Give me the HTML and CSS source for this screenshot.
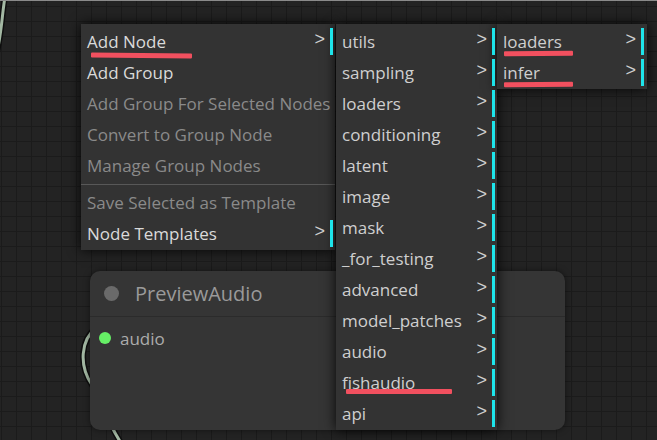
FILE: index.html
```html
<!DOCTYPE html>
<html>
<head>
<meta charset="utf-8">
<link rel="stylesheet" href="styles.css">
</head>
<body>
<div class="canvas">
  <svg class="links" width="657" height="440" viewBox="0 0 657 440">
    <path class="link-edge" d="M5 -3 C 2 14, 2 30, -3 52"/>
    <path class="link-core" d="M5 -3 C 2 14, 2 30, -3 52"/>
    <path class="link-edge" d="M97 327 C 80 340, 79 366, 92 385 C 101 399, 106 421, 123 446"/>
    <path class="link-core" d="M97 327 C 80 340, 79 366, 92 385 C 101 399, 106 421, 123 446"/>
  </svg>

  <div class="node">
    <div class="node-title">
      <span class="title-dot"></span>
      <span class="title-text">PreviewAudio</span>
    </div>
    <div class="node-body">
      <div class="slot">
        <span class="slot-dot"></span>
        <span class="slot-label">audio</span>
      </div>
    </div>
  </div>

  <div class="menus">
    <div class="menu menu-main">
      <div class="entry sub"><span class="label">Add Node</span><span class="arrow">&gt;</span><span class="bar"></span><span class="mark mark-addnode"></span></div>
      <div class="entry"><span class="label">Add Group</span></div>
      <div class="entry disabled"><span class="label">Add Group For Selected Nodes</span></div>
      <div class="entry disabled"><span class="label">Convert to Group Node</span></div>
      <div class="entry disabled"><span class="label">Manage Group Nodes</span></div>
      <div class="separator"></div>
      <div class="entry disabled"><span class="label">Save Selected as Template</span></div>
      <div class="entry sub"><span class="label">Node Templates</span><span class="arrow">&gt;</span><span class="bar"></span></div>
    </div>

    <div class="menu menu-cats">
      <div class="entry sub"><span class="label">utils</span><span class="arrow">&gt;</span><span class="bar"></span></div>
      <div class="entry sub"><span class="label">sampling</span><span class="arrow">&gt;</span><span class="bar"></span></div>
      <div class="entry sub"><span class="label">loaders</span><span class="arrow">&gt;</span><span class="bar"></span></div>
      <div class="entry sub"><span class="label">conditioning</span><span class="arrow">&gt;</span><span class="bar"></span></div>
      <div class="entry sub"><span class="label">latent</span><span class="arrow">&gt;</span><span class="bar"></span></div>
      <div class="entry sub"><span class="label">image</span><span class="arrow">&gt;</span><span class="bar"></span></div>
      <div class="entry sub"><span class="label">mask</span><span class="arrow">&gt;</span><span class="bar"></span></div>
      <div class="entry sub"><span class="label">_for_testing</span><span class="arrow">&gt;</span><span class="bar"></span></div>
      <div class="entry sub"><span class="label">advanced</span><span class="arrow">&gt;</span><span class="bar"></span></div>
      <div class="entry sub"><span class="label">model_patches</span><span class="arrow">&gt;</span><span class="bar"></span></div>
      <div class="entry sub"><span class="label">audio</span><span class="arrow">&gt;</span><span class="bar"></span></div>
      <div class="entry sub"><span class="label">fishaudio</span><span class="arrow">&gt;</span><span class="bar"></span><span class="mark mark-fish"></span></div>
      <div class="entry sub"><span class="label">api</span><span class="arrow">&gt;</span><span class="bar"></span></div>
    </div>

    <div class="menu menu-sub">
      <div class="entry sub"><span class="label">loaders</span><span class="arrow">&gt;</span><span class="bar"></span><span class="mark mark-loaders"></span></div>
      <div class="entry sub"><span class="label">infer</span><span class="arrow">&gt;</span><span class="bar"></span><span class="mark mark-infer"></span></div>
    </div>
  </div>
</div>
</body>
</html>
```

FILE: styles.css
```css
* { box-sizing: border-box; }

html, body {
  margin: 0;
  padding: 0;
  background: #232323;
}

body {
  width: 657px;
  height: 440px;
  overflow: hidden;
  font-family: "Open Sans", "Noto Sans", "Liberation Sans", sans-serif;
}

.canvas {
  position: relative;
  width: 657px;
  height: 440px;
  border-top: 1px solid #8a8a8a;
  background-color: #232323;
  background-image:
    linear-gradient(#1b1b1b 1px, transparent 1px),
    linear-gradient(90deg, #1b1b1b 1px, transparent 1px);
  background-size: 15px 15px;
  background-position: 1px 5px;
  overflow: hidden;
}

.links {
  position: absolute;
  left: 0;
  top: -1px;
}

.link-edge {
  fill: none;
  stroke: #0e0e0e;
  stroke-width: 6;
}

.link-core {
  fill: none;
  stroke: #a3b8a3;
  stroke-width: 3;
}

/* node */
.node {
  position: absolute;
  left: 90px;
  top: 270px;
  width: 475px;
  height: 159px;
  background: #353535;
  border-radius: 10px;
  box-shadow: 0 0 6px rgba(0, 0, 0, 0.5);
  display: flex;
  flex-direction: column;
}

.node-title {
  height: 46px;
  display: flex;
  align-items: center;
  padding-left: 14px;
  gap: 16px;
  border-bottom: 1px solid #2b2b2b;
}

.title-dot {
  width: 15px;
  height: 15px;
  border-radius: 50%;
  background: #6a6a6a;
}

.title-text {
  color: #9a9a9a;
  font-size: 20px;
}

.node-body {
  padding-top: 9px;
  padding-left: 9px;
}

.slot {
  display: flex;
  align-items: center;
  gap: 9px;
  height: 24px;
}

.slot-dot {
  width: 12px;
  height: 12px;
  border-radius: 50%;
  background: #66ef66;
}

.slot-label {
  color: #acacac;
  font-size: 17px;
}

/* menus */
.menus {
  position: absolute;
  left: 81px;
  top: 23px;
  display: flex;
  align-items: flex-start;
}

.menu {
  background: #333333;
  padding: 2px 2px 1px 0;
  display: flex;
  flex-direction: column;
  box-shadow: 0 0 12px rgba(0, 0, 0, 0.9);
}

.menu-main { width: 254px; }
.menu-cats { width: 161px; margin-left: 1px; }
.menu-sub { width: 150px; padding-right: 3px; }

.entry {
  position: relative;
  height: 31px;
  display: flex;
  align-items: center;
  padding-left: 6px;
  font-size: 17px;
  color: #dadada;
}

.menu-cats .entry,
.menu-sub .entry {
  color: #cfcfcf;
}

.entry.disabled {
  color: #8a8a8a;
}

.label {
  flex: 1;
  white-space: nowrap;
}

.arrow {
  color: #cfcfcf;
  font-family: "Liberation Sans", sans-serif;
  font-size: 18px;
  margin-right: 5px;
  margin-top: -5px;
}

.bar {
  width: 3px;
  height: 27px;
  background: #1ee4ea;
}

.separator {
  height: 4px;
  border-bottom: 1px solid #585858;
  margin-right: -2px;
}

.separator + .entry { margin-top: 2px; }

/* red annotation strokes */
.mark {
  position: absolute;
  height: 5px;
  background: #f2505f;
  border-radius: 1px;
}

.mark-addnode { left: 10px; top: 27px; width: 101px; transform: rotate(0.7deg); }
.mark-fish { left: 10px; top: 22px; width: 106px; }
.mark-loaders { left: 7px; top: 25px; width: 69px; transform: rotate(-0.6deg); }
.mark-infer { left: 7px; top: 25px; width: 69px; transform: rotate(-0.6deg); }
```
